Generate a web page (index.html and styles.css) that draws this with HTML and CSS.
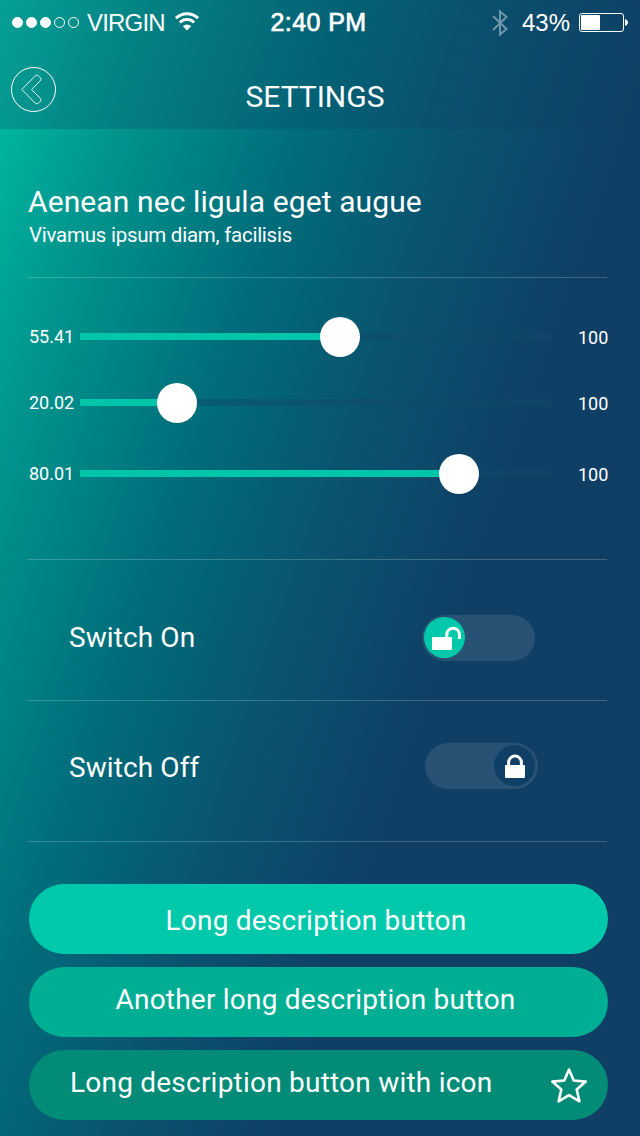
FILE: index.html
```html
<!DOCTYPE html>
<html lang="en">

<head>
  <meta charset="UTF-8">
  <title>Settings</title>
  <link rel="stylesheet" href="styles.css">
</head>

<body>
  <header class="header">
    <div class="status-bar">
      <div class="status-left">
        <div class="signal">
          <i class="dot full"></i>
          <i class="dot full"></i>
          <i class="dot full"></i>
          <i class="dot"></i>
          <i class="dot"></i>
        </div>
        <span class="carrier">VIRGIN</span>
        <svg class="wifi" width="24" height="19" viewBox="0 0 24 19">
          <path d="M1 6.2a15.6 15.6 0 0 1 22 0" fill="none" stroke="#fff" stroke-width="3"/>
          <path d="M4.9 10.4a10 10 0 0 1 14.2 0" fill="none" stroke="#fff" stroke-width="2.8"/>
          <path d="M12 18.5l-4.1-4.3a5.8 5.8 0 0 1 8.2 0z" fill="#fff"/>
        </svg>
      </div>
      <span class="time">2:40 PM</span>
      <div class="status-right">
        <svg class="bluetooth" width="16" height="28" viewBox="0 0 16 28">
          <path d="M1 7l13.500 13L8 25.500V2.500l6.500 5.500L1 21" fill="none" stroke="#fff" stroke-width="2"/>
        </svg>
        <span class="percent">43%</span>
        <svg class="battery" width="49" height="20" viewBox="0 0 49 20">
          <rect x=".5" y=".5" width="44" height="18" rx="2.5" fill="none" stroke="#fff"/>
          <rect x="2" y="2" width="19" height="15" rx="1" fill="#fff"/>
          <path d="M46 6.2c1.6 0 3 1.400 3 3.300s-1.400 3.300-3 3.300z" fill="#fff"/>
        </svg>
      </div>
    </div>

    <div class="nav-bar">
      <a class="back" href="#" aria-label="Back">
        <svg width="46" height="46" viewBox="0 0 46 46" fill="none" stroke="#fff">
          <circle cx="23.500" cy="22.500" r="22"/>
          <path d="M11.800 22.500L25.400 8.700q1.400-1.300 2.900 0l2 2q1.400 1.500 0 3L21.500 22.500l8.800 8.800q1.400 1.500 0 3l-2 2q-1.500 1.300-2.900 0z" stroke-width=".9"/>
        </svg>
      </a>
      <h1>SETTINGS</h1>
    </div>
  </header>

  <main>
    <section class="intro">
      <h2>Aenean nec ligula eget augue</h2>
      <p>Vivamus ipsum diam, facilisis</p>
    </section>

    <section class="sliders">
      <div class="slider">
        <span class="value">55.41</span>
        <div class="track">
          <div class="fill" style="width: 55.2%"></div>
        </div>
        <span class="max">100</span>
      </div>
      <div class="slider">
        <span class="value">20.02</span>
        <div class="track">
          <div class="fill" style="width: 20.6%"></div>
        </div>
        <span class="max">100</span>
      </div>
      <div class="slider last">
        <span class="value">80.01</span>
        <div class="track">
          <div class="fill" style="width: 80.5%"></div>
        </div>
        <span class="max">100</span>
      </div>
    </section>

    <section class="option option-on">
      <span class="label">Switch On</span>
      <div class="switch on">
        <div class="knob">
          <svg width="41" height="41" viewBox="0 0 41 41">
            <rect x="8" y="20" width="20" height="13" rx="1" fill="#fff"/>
            <path d="M22.800 20.500v-3a6.300 6.300 0 0 1 12.600 0v4.500" fill="none" stroke="#fff" stroke-width="3"/>
          </svg>
        </div>
      </div>
    </section>

    <section class="option option-off">
      <span class="label">Switch Off</span>
      <div class="switch off">
        <div class="knob">
          <svg width="41" height="41" viewBox="0 0 41 41">
            <rect x="11" y="20" width="20" height="13" rx="1" fill="#fff"/>
            <path d="M14.600 20.500v-3a6.400 6.400 0 0 1 12.800 0v3" fill="none" stroke="#fff" stroke-width="3"/>
          </svg>
        </div>
      </div>
    </section>

    <section class="buttons">
      <button class="btn btn-first">Long description button</button>
      <button class="btn btn-second">Another long description button</button>
      <button class="btn btn-third">
        <span>Long description button with icon</span>
        <svg width="38" height="36" viewBox="0 0 38 36">
          <path d="M19 2.500l4.700 11 12 1.100-9 7.900 2.700 11.800L19 28.200 8.600 34.300l2.700-11.800-9-7.900 12-1.100z" fill="none" stroke="#fff" stroke-width="2.600" stroke-linejoin="round"/>
        </svg>
      </button>
    </section>
  </main>
</body>

</html>
```
FILE: styles.css
```css
* {
  box-sizing: border-box;
}

body {
  margin: 0;
  width: 640px;
  height: 1136px;
  overflow: hidden;
  font-family: Roboto, sans-serif;
  color: #fff;
  background: linear-gradient(109deg, #00c1a6 0%, #00968e 15%, #006e7b 33%, #095570 48%, #0f3f65 65%);
}

h1, h2, p {
  margin: 0;
  font-weight: 400;
}

/* Header */
.header {
  height: 129px;
  background: rgba(15, 62, 101, .25);
}

.status-bar {
  display: grid;
  grid-template-columns: 1fr auto 1fr;
  align-items: center;
  height: 45px;
  padding: 0 12px;
  font-family: "Liberation Sans", Arial, sans-serif;
  font-size: 24px;
}

.status-left,
.status-right,
.signal {
  display: flex;
  align-items: center;
}

.signal {
  gap: 3px;
}

.dot {
  width: 11px;
  height: 11px;
  border: 1px solid #fff;
  border-radius: 50%;
}

.dot.full {
  background: #fff;
}

.carrier {
  margin-left: 8px;
  letter-spacing: -.8px;
}

.wifi {
  margin-left: 10px;
  margin-bottom: 2px;
}

.time {
  padding-right: 3px;
  font-size: 25px;
  letter-spacing: .4px;
  -webkit-text-stroke: .7px #fff;
}

.status-right {
  justify-content: flex-end;
}

.bluetooth {
  opacity: .4;
}

.percent {
  margin: 0 9px 0 14px;
}

.nav-bar {
  display: grid;
  grid-template-columns: 46px 1fr 46px;
  height: 84px;
  padding: 22px 20px 0 10px;
}

.back {
  height: 46px;
}

.back svg {
  display: block;
}

h1 {
  padding-top: 12px;
  font-size: 30px;
  line-height: 36px;
  text-align: center;
}

/* Sections */
.intro,
.sliders,
.option {
  margin: 0 33px 0 27px;
  border-bottom: 1px solid rgba(255, 255, 255, .2);
}

.intro {
  height: 149px;
  padding: 54px 0 0 1px;
}

.intro h2 {
  font-size: 30px;
  line-height: 38px;
  letter-spacing: .1px;
}

.intro p {
  padding-left: 1px;
  font-size: 20.5px;
  line-height: 28px;
  letter-spacing: -.25px;
}

.sliders {
  height: 282px;
  padding-top: 39px;
}

.slider {
  display: flex;
  align-items: center;
  height: 40px;
  margin-bottom: 26px;
  padding-left: 2px;
  font-size: 18px;
}

.slider.last {
  margin-top: 31px;
}

.value {
  flex: none;
  width: 51px;
  padding-bottom: 2px;
}

.track {
  flex: none;
  width: 471px;
  height: 7px;
  margin-bottom: 1px;
  background: rgba(16, 74, 106, .5);
}

.fill {
  position: relative;
  height: 7px;
  background: #00c6a9;
}

.fill::after {
  content: "";
  position: absolute;
  top: -16px;
  right: -20px;
  width: 40px;
  height: 40px;
  border-radius: 50%;
  background: #fff;
  box-shadow: 0 1px 1px rgba(0, 0, 0, .1);
}

.max {
  flex: none;
  padding-left: 27px;
}

.option {
  display: flex;
  justify-content: space-between;
  height: 141px;
  padding-left: 42px;
}

.label {
  font-size: 28px;
  line-height: 34px;
  letter-spacing: .1px;
}

.option-on {
  padding-top: 55px;
  padding-right: 72px;
}

.option-off {
  padding-top: 42px;
  padding-right: 69px;
}

.option-on .label {
  padding-top: 6px;
}

.option-off .label {
  padding-top: 8px;
}

.switch {
  display: flex;
  width: 113px;
  height: 46px;
  padding: 2px;
  border-radius: 23px;
  background: rgba(255, 255, 255, .1);
}

.switch.off {
  justify-content: flex-end;
  padding-right: 3px;
}

.knob {
  width: 41px;
  height: 41px;
  border-radius: 50%;
  background: #0f3f65;
}

.switch.on .knob {
  background: #00c9ab;
}

/* Buttons */
.buttons {
  display: flex;
  flex-direction: column;
  gap: 13px;
  padding: 42px 32px 0 29px;
}

.btn {
  height: 70px;
  padding: 0;
  border: none;
  border-radius: 35px;
  color: #fff;
  font-family: inherit;
  font-size: 28px;
  letter-spacing: .22px;
}

.btn-first {
  padding: 2px 5px 0 0;
  background: #00c9ab;
}

.btn-second {
  padding: 0 6px 6px 0;
  background: #00ae93;
}

.btn-third {
  display: flex;
  align-items: center;
  justify-content: space-between;
  padding: 0 20px 0 41px;
  background: #028b76;
}

.btn-third span {
  padding-bottom: 6px;
}
```
